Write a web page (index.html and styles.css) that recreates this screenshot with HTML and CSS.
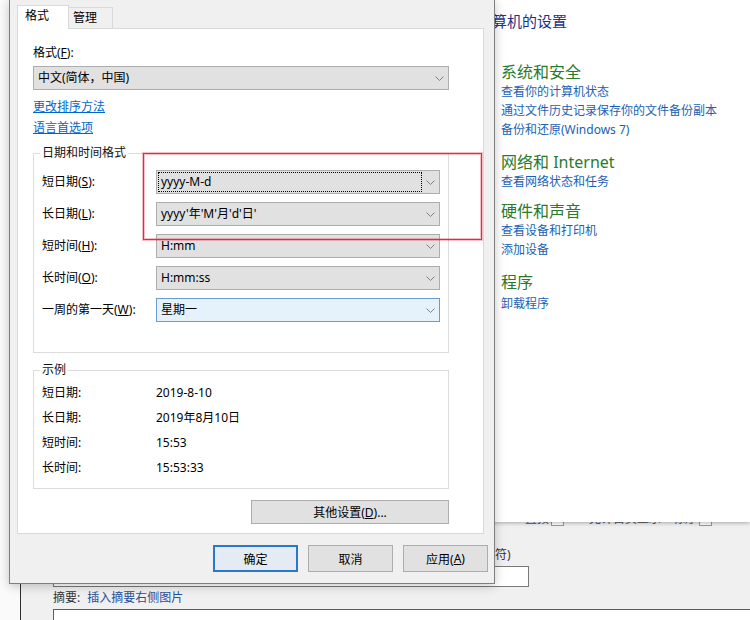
FILE: index.html
```html
<!DOCTYPE html>
<html lang="zh-CN">
<head>
<meta charset="utf-8">
<title>区域</title>
<link rel="stylesheet" href="styles.css">
</head>
<body>
<div class="desktop">

  <div class="win-back">
    <div class="form">
      <div class="opts"><span>置顶</span><span class="cb"></span><span class="opt2">允许首页显示</span><span class="opt3">标序</span><span class="cb"></span></div>
      <div class="field-label">符)</div>
      <div class="input"></div>
      <div class="summary"><span>摘要:</span><a class="ins">插入摘要右侧图片</a></div>
      <div class="textarea"></div>
    </div>
  </div>

  <div class="win-cp">
    <div class="cp-title">调整计算机的设置</div>
    <div class="cp-cats">
      <section class="cat">
        <h2>系统和安全</h2>
        <a>查看你的计算机状态</a>
        <a>通过文件历史记录保存你的文件备份副本</a>
        <a>备份和还原(Windows 7)</a>
      </section>
      <section class="cat">
        <h2>网络和 Internet</h2>
        <a>查看网络状态和任务</a>
      </section>
      <section class="cat">
        <h2>硬件和声音</h2>
        <a>查看设备和打印机</a>
        <a>添加设备</a>
      </section>
      <section class="cat">
        <h2>程序</h2>
        <a>卸载程序</a>
      </section>
    </div>
  </div>

  <div class="dialog">
    <div class="tabs">
      <div class="tab active">格式</div>
      <div class="tab">管理</div>
    </div>
    <div class="panel">
      <div class="lbl">格式(<u>F</u>):</div>
      <div class="combo wide">
        <span class="val">中文(简体，中国)</span>
        <span class="arr"><svg width="9" height="5" viewBox="0 0 9 5"><polyline points="0.5,0.5 4.5,4.5 8.5,0.5" fill="none" stroke="#808080" stroke-width="1"/></svg></span>
      </div>
      <a class="link l1">更改排序方法</a>
      <a class="link l2">语言首选项</a>

      <fieldset class="group fmt">
        <legend>日期和时间格式</legend>
        <div class="rows">
          <label>短日期(<u>S</u>):</label>
          <div class="combo focus">
            <span class="val">yyyy-M-d</span>
            <span class="arr"><svg width="9" height="5" viewBox="0 0 9 5"><polyline points="0.5,0.5 4.5,4.5 8.5,0.5" fill="none" stroke="#808080" stroke-width="1"/></svg></span>
          </div>
          <label>长日期(<u>L</u>):</label>
          <div class="combo">
            <span class="val">yyyy'年'M'月'd'日'</span>
            <span class="arr"><svg width="9" height="5" viewBox="0 0 9 5"><polyline points="0.5,0.5 4.5,4.5 8.5,0.5" fill="none" stroke="#808080" stroke-width="1"/></svg></span>
          </div>
          <label>短时间(<u>H</u>):</label>
          <div class="combo">
            <span class="val">H:mm</span>
            <span class="arr"><svg width="9" height="5" viewBox="0 0 9 5"><polyline points="0.5,0.5 4.5,4.5 8.5,0.5" fill="none" stroke="#808080" stroke-width="1"/></svg></span>
          </div>
          <label>长时间(<u>O</u>):</label>
          <div class="combo">
            <span class="val">H:mm:ss</span>
            <span class="arr"><svg width="9" height="5" viewBox="0 0 9 5"><polyline points="0.5,0.5 4.5,4.5 8.5,0.5" fill="none" stroke="#808080" stroke-width="1"/></svg></span>
          </div>
          <label>一周的第一天(<u>W</u>):</label>
          <div class="combo hover">
            <span class="val">星期一</span>
            <span class="arr"><svg width="9" height="5" viewBox="0 0 9 5"><polyline points="0.5,0.5 4.5,4.5 8.5,0.5" fill="none" stroke="#808080" stroke-width="1"/></svg></span>
          </div>
        </div>
      </fieldset>

      <fieldset class="group sample">
        <legend>示例</legend>
        <div class="srows">
          <span>短日期:</span><span>2019-8-10</span>
          <span>长日期:</span><span>2019年8月10日</span>
          <span>短时间:</span><span>15:53</span>
          <span>长时间:</span><span>15:53:33</span>
        </div>
      </fieldset>

      <button class="btn more">其他设置(<u>D</u>)...</button>
    </div>
    <div class="actions">
      <button class="btn default">确定</button>
      <button class="btn">取消</button>
      <button class="btn">应用(<u>A</u>)</button>
    </div>
  </div>

  <div class="mark"></div>
</div>
</body>
</html>
```
FILE: styles.css
```css
* { box-sizing: border-box; margin: 0; padding: 0; }
html, body { width: 750px; height: 620px; overflow: hidden; }
body {
  font-family: "Noto Sans", "Noto Sans CJK SC", sans-serif;
  font-size: 12px;
  color: #000;
  background: #fafafa;
}
.desktop { position: relative; width: 750px; height: 620px; overflow: hidden; }

/* background browser window */
.win-back {
  position: absolute; left: 20px; top: 0; right: 0; bottom: 0;
  background: #f0f0f0;
  border-left: 1px solid #2f2f2f;
}
.form { padding-left: 32px; display: flex; flex-direction: column; align-items: flex-start; }
.opts {
  margin-top: 511px; margin-left: 472px;
  display: flex; align-items: center; height: 16px; line-height: 16px;
  color: #555; white-space: nowrap;
}
.cb { width: 13px; height: 13px; border: 1px solid #999; background: #fff; margin-left: 2px; }
.opt2 { margin-left: 25px; }
.opt3 { margin-left: 12px; }
.field-label {
  margin-top: 20px; margin-left: 442px; line-height: 16px;
  color: #333; white-space: nowrap;
}
.input { margin-top: 3px; width: 476px; height: 21px; background: #fff; border: 1px solid #7a7a7a; }
.summary { margin-top: 3px; line-height: 16px; color: #333; display: flex; gap: 7px; white-space: nowrap; }
.summary .ins { color: #1f4e9c; }
.textarea { margin-top: 3px; width: 720px; height: 60px; background: #fff; border: 1px solid #5e5e5e; }

/* control panel window */
.win-cp {
  position: absolute; left: 380px; top: 0; width: 370px; height: 522px;
  background: #fff;
  box-shadow: 0 1px 4px rgba(0,0,0,0.3);
}
.cp-title {
  margin: 12px 0 0 67px; font-size: 15px; line-height: 18px;
  color: #1e3287; white-space: nowrap;
}
.cp-cats { margin-left: 121px; display: flex; flex-direction: column; }
.cat { display: flex; flex-direction: column; align-items: flex-start; }
.cat h2 { font-size: 16px; font-weight: normal; line-height: 20px; color: #2b7a2b; white-space: nowrap; }
.cat a { line-height: 19px; color: #1a5fb4; white-space: nowrap; }
.cat:nth-child(1) { margin-top: 32px; }
.cat:nth-child(2) { margin-top: 13px; }
.cat:nth-child(3) { margin-top: 10px; }
.cat:nth-child(4) { margin-top: 13px; }
.cat:nth-child(4) a { margin-top: 2px; }

/* regional dialog */
.dialog {
  position: absolute; left: 9px; top: -1px; width: 486px; height: 585px;
  background: #f0f0f0;
  border: 1px solid #7f7f7f;
  box-shadow: 0 2px 10px rgba(0,0,0,0.22);
  padding: 5px 6px 0 7px;
  display: flex; flex-direction: column;
}
.tabs { display: flex; align-items: flex-end; height: 23px; position: relative; z-index: 1; }
.tab {
  height: 21px; width: 44px; padding-left: 4px; line-height: 20px;
  border: 1px solid #d9d9d9; border-bottom: 0; border-left: 0;
  background: #f0f0f0; white-space: nowrap;
}
.tab.active {
  height: 24px; width: 52px; padding-left: 7px; margin-bottom: -1px;
  border-left: 1px solid #d9d9d9; background: #fff;
}
.panel {
  width: 467px; background: #fff; border: 1px solid #d9d9d9;
  padding: 16px 34px 9px 15px;
  display: flex; flex-direction: column;
}
.lbl { line-height: 16px; }
.combo {
  display: flex; height: 24px;
  border: 1px solid #adadad; background: #e1e1e1;
  white-space: nowrap;
}
.combo.wide { margin-top: 5px; }
.combo.hover { background: #e5f1fb; border-color: #6c9bd2; }
.combo .val {
  flex: 1; margin: 1px 0 1px 1px;
  border: 1px dotted transparent;
  padding-left: 2px; line-height: 18px; overflow: hidden;
}
.combo.focus .val { border-color: #000; }
.combo .arr { width: 17px; display: flex; align-items: center; justify-content: center; }
.combo .arr svg { display: block; }
.link { display: block; align-self: flex-start; line-height: 16px; color: #0066cc; text-decoration: underline; }
.link.l1 { margin-top: 9px; }
.link.l2 { margin-top: 5px; }

.group {
  margin-top: 9px;
  border: 1px solid #dcdcdc;
  min-width: 0;
}
.group legend { line-height: 16px; padding: 0 2px; margin-left: -2px; color: #111; }
.group.fmt { padding: 9px 8px 30px 8px; }
.rows {
  display: grid; grid-template-columns: 114px 284px;
  row-gap: 8px; align-items: center;
}
.rows label { line-height: 16px; white-space: nowrap; }
.group.sample { padding: 2px 8px 8px 8px; }
.srows {
  display: grid; grid-template-columns: 114px 1fr;
  grid-auto-rows: 25px; align-items: center; line-height: 16px;
}

.btn {
  font: inherit; color: #000;
  height: 24px; background: #e1e1e1; border: 1px solid #adadad;
  display: flex; align-items: center; justify-content: center;
  white-space: nowrap;
}
.btn.more { margin-top: 11px; width: 198px; align-self: flex-end; }
.actions { margin-top: 11px; display: flex; justify-content: flex-end; gap: 10px; }
.actions .btn { width: 85px; height: 27px; }
.actions .btn.default { border: 2px solid #2878d0; background: #e4ebf3; }

/* red annotation rectangle drawn over the screenshot */
.mark {
  position: absolute; left: 143px; top: 153px; width: 339px; height: 87px;
  border: 1px solid #e8283e;
  box-shadow: 0 0 0 1px rgba(232, 40, 62, 0.3), inset 0 0 0 1px rgba(232, 40, 62, 0.3);
  pointer-events: none;
}
```
